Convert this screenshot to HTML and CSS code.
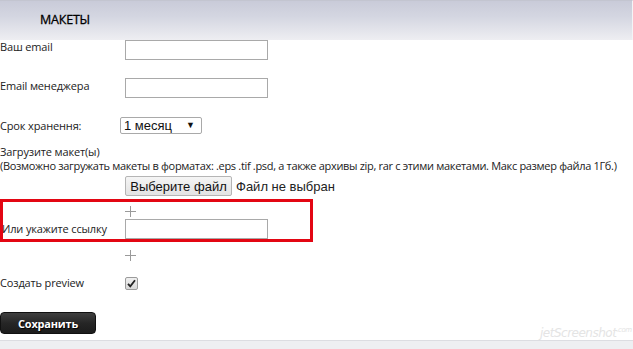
FILE: index.html
```html
<!DOCTYPE html>
<html lang="ru">
<head>
    <meta charset="UTF-8">
    <meta name="viewport" content="width=device-width, initial-scale=1.0">
    <title>Макеты</title>
    <link rel="stylesheet" href="styles.css">
</head>
<body>
    <div class="header">
        <h1>МАКЕТЫ</h1>
    </div>
    <form class="form">
        <div class="row">
            <label class="label">Ваш email</label>
            <input type="text" class="text-input">
        </div>
        <div class="row row-manager">
            <label class="label">Email менеджера</label>
            <input type="text" class="text-input">
        </div>
        <div class="row row-period">
            <label class="label label-period">Срок хранення:</label>
            <div class="select">
                <span class="select-value">1 месяц</span>
                <span class="select-arrow">▼</span>
            </div>
        </div>
        <div class="upload">
            <div class="upload-text">Загрузите макет(ы)</div>
            <div class="upload-text upload-note">(Возможно загружать макеты в форматах: .eps .tif .psd, а также архивы zip, rar с этими макетами. Макс размер файла 1Гб.)</div>
            <div class="file-row">
                <button type="button" class="file-button">Выберите файл</button>
                <span class="file-name">Файл не выбран</span>
            </div>
        </div>
        <div class="plus">
            <svg width="11" height="11" viewBox="0 0 11 11"><path d="M5.5 0v11M0 5.5h11" stroke="#9a9a9a" stroke-width="1"/></svg>
        </div>
        <div class="row row-link">
            <label class="label label-link">Или укажите ссылку</label>
            <input type="text" class="text-input">
        </div>
        <div class="plus plus-second">
            <svg width="11" height="11" viewBox="0 0 11 11"><path d="M5.5 0v11M0 5.5h11" stroke="#9a9a9a" stroke-width="1"/></svg>
        </div>
        <div class="row row-preview">
            <label class="label label-preview">Создать preview</label>
            <span class="checkbox">
                <svg width="9" height="9" viewBox="0 0 9 9"><path d="M1 4.8l2.3 2.6L8 1.2" fill="none" stroke="#222" stroke-width="1.8"/></svg>
            </span>
        </div>
        <button type="button" class="save-button">Сохранить</button>
    </form>
    <div class="footer"></div>
    <div class="highlight"></div>
    <div class="watermark">jetScreenshot<span class="watermark-com">.com</span></div>
</body>
</html>
```

FILE: styles.css
```css
body {
    margin: 0;
    font-family: 'Open Sans', 'Noto Sans', sans-serif;
    font-size: 11px;
    letter-spacing: -0.15px;
    color: #222;
    background: white;
    height: 349px;
    overflow: hidden;
    position: relative;
}

.header {
    height: 39px;
    border-top: 1px solid #c3c5d0;
    border-right: 1px solid #f4f4f6;
    background: linear-gradient(to bottom, #c9cbd9 0%, #d4d6e1 40%, #eeeef2 100%);
}

h1 {
    margin: 0;
    padding: 11px 0 0 40px;
    font-size: 12.5px;
    font-weight: normal;
    -webkit-text-stroke: 0.3px #000;
    color: #000;
    line-height: 16px;
    letter-spacing: -0.2px;
}

.form {
    margin: 0;
}

.row {
    display: flex;
    align-items: flex-start;
}

.label {
    width: 125px;
    flex-shrink: 0;
    line-height: 14px;
}

.row-manager {
    margin-top: 18px;
}

.row-manager .label {
    padding-top: 1px;
}

.text-input {
    width: 143px;
    height: 20px;
    box-sizing: border-box;
    border: 1px solid #a9a9a9;
    margin: 0;
    padding: 0;
    background: white;
}

.row-period {
    margin-top: 19px;
}

.label-period {
    width: 120px;
    padding-top: 2px;
}

.select {
    position: relative;
    width: 82px;
    height: 17px;
    box-sizing: border-box;
    border: 1px solid #a9a9a9;
    border-radius: 2px;
    font-family: 'Liberation Sans', Arial, sans-serif;
    font-size: 13px;
    letter-spacing: 0;
    line-height: 15px;
    padding-left: 3px;
    color: #111;
}

.select-arrow {
    position: absolute;
    right: 6px;
    top: 0;
    font-size: 9px;
    line-height: 15px;
}

.upload {
    margin-top: 11px;
}

.upload-text {
    line-height: 14px;
    white-space: nowrap;
}

.upload-note {
    letter-spacing: -0.32px;
}

.file-row {
    display: flex;
    align-items: center;
    margin-top: 3px;
    padding-left: 125px;
}

.file-button {
    height: 20px;
    width: 107px;
    padding: 0;
    margin: 0;
    border: 1px solid #b5b5b5;
    border-radius: 2px;
    background: linear-gradient(to bottom, #f5f5f5, #e3e3e3);
    font-family: 'Liberation Sans', Arial, sans-serif;
    font-size: 13px;
    color: #111;
}

.file-name {
    margin-left: 4px;
    font-family: 'Liberation Sans', Arial, sans-serif;
    font-size: 13px;
    letter-spacing: 0;
    color: #222;
}

.plus {
    margin-top: 10px;
    padding-left: 125px;
    height: 11px;
}

.plus svg {
    display: block;
}

.row-link {
    margin-top: 2px;
}

.label-link {
    padding: 3px 0 0 2px;
    width: 123px;
}

.plus-second {
    margin-top: 11px;
}

.row-preview {
    margin-top: 15px;
    align-items: center;
}

.checkbox {
    width: 11px;
    height: 11px;
    border: 1px solid #9b9b9b;
    border-radius: 2px;
    background: linear-gradient(to bottom, #f0f0f0, #d8d8d8);
    display: flex;
    align-items: center;
    justify-content: center;
}

.save-button {
    display: block;
    margin-top: 22px;
    width: 96px;
    height: 22px;
    border: 1px solid #111;
    border-radius: 4px;
    background: linear-gradient(to bottom, #3f3f3f, #262626 50%, #1c1c1c);
    color: white;
    font-family: 'Open Sans', 'Noto Sans', sans-serif;
    font-weight: bold;
    font-size: 11px;
    letter-spacing: -0.2px;
    text-shadow: 1px 1px 1px #000;
    padding: 0;
}

.footer {
    margin-top: 6px;
    height: 9px;
    border-top: 1px solid #dcdde2;
    background: #eeeff2;
}

.highlight {
    position: absolute;
    left: 0;
    top: 199px;
    width: 313px;
    height: 43px;
    box-sizing: border-box;
    border: 3px solid #e30613;
}

.watermark {
    position: absolute;
    left: 540px;
    top: 326px;
    font-family: 'DejaVu Sans', sans-serif;
    font-style: italic;
    font-size: 12px;
    color: #e4e4e4;
    letter-spacing: -0.5px;
}

.watermark-com {
    font-size: 7px;
    vertical-align: super;
}
```
